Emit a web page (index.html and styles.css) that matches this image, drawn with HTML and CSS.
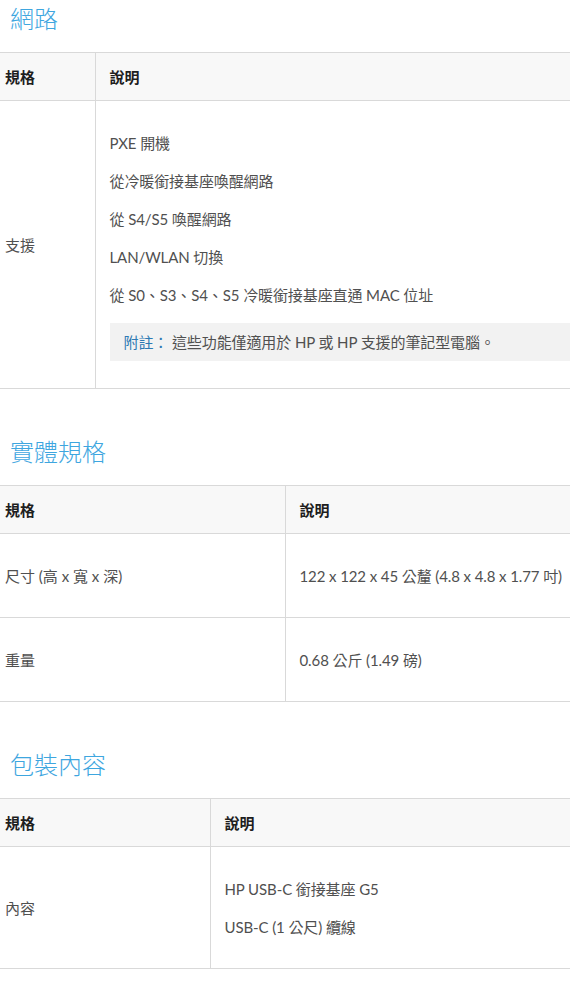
FILE: index.html
```html
<!DOCTYPE html>
<html lang="zh-Hant">
<head>
<meta charset="utf-8">
<title>規格</title>
<link rel="stylesheet" href="styles.css">
</head>
<body>
<section class="section">
  <h2 class="title">網路</h2>
  <table class="spec">
    <colgroup><col class="w95"><col></colgroup>
    <thead><tr><th class="k">規格</th><th class="v">說明</th></tr></thead>
    <tbody>
      <tr>
        <td class="k">支援</td>
        <td class="v list">
          <p>PXE 開機</p>
          <p>從冷暖銜接基座喚醒網路</p>
          <p>從 S4/S5 喚醒網路</p>
          <p>LAN/WLAN 切換</p>
          <p>從 S0、S3、S4、S5 冷暖銜接基座直通 MAC 位址</p>
          <div class="note"><span class="note-label">附註：</span> 這些功能僅適用於 HP 或 HP 支援的筆記型電腦。</div>
        </td>
      </tr>
    </tbody>
  </table>
</section>

<section class="section">
  <h2 class="title">實體規格</h2>
  <table class="spec">
    <colgroup><col class="w285"><col></colgroup>
    <thead><tr><th class="k">規格</th><th class="v">說明</th></tr></thead>
    <tbody>
      <tr class="row84"><td class="k">尺寸 (高 x 寬 x 深)</td><td class="v">122 x 122 x 45 公釐 (4.8 x 4.8 x 1.77 吋)</td></tr>
      <tr class="row84"><td class="k">重量</td><td class="v">0.68 公斤 (1.49 磅)</td></tr>
    </tbody>
  </table>
</section>

<section class="section">
  <h2 class="title">包裝內容</h2>
  <table class="spec">
    <colgroup><col class="w210"><col></colgroup>
    <thead><tr><th class="k">規格</th><th class="v">說明</th></tr></thead>
    <tbody>
      <tr>
        <td class="k">內容</td>
        <td class="v list short">
          <p>HP USB-C 銜接基座 G5</p>
          <p>USB-C (1 公尺) 纜線</p>
        </td>
      </tr>
    </tbody>
  </table>
</section>
</body>
</html>
```

FILE: styles.css
```css
html, body {
  margin: 0;
  padding: 0;
  background: #ffffff;
}
body {
  width: 570px;
  overflow: hidden;
  font-family: "Lato", "Noto Sans CJK TC", sans-serif;
  font-size: 15px;
  color: #505050;
}
.section {
  margin-bottom: 44px;
}
.title {
  margin: 0 0 16px 0;
  padding-left: 10px;
  height: 36px;
  line-height: 36px;
  font-size: 24px;
  font-weight: 300;
  color: #3ea6df;
  font-family: "Noto Sans CJK TC", sans-serif;
}
.spec {
  width: 100%;
  border-collapse: collapse;
  table-layout: fixed;
}
.w95 { width: 95px; }
.w285 { width: 285px; }
.w210 { width: 210px; }
.spec th,
.spec td {
  border: 1px solid #d9d9d9;
  vertical-align: middle;
  text-align: left;
  white-space: nowrap;
  line-height: 20px;
}
.spec tr > :first-child { border-left: none; }
.spec tr > :last-child { border-right: none; }
.spec thead tr {
  height: 48px;
  background: #f8f8f8;
}
.spec th {
  font-weight: 700;
  color: #1e1e1e;
  font-size: 15px;
}
.spec .k { padding: 0 5px; }
.spec .v { padding: 0 14px; letter-spacing: -0.1px; }
.row84 { height: 84px; }
.list {
  padding-top: 32px !important;
  padding-bottom: 27px !important;
}
.list.short {
  padding-top: 32px !important;
  padding-bottom: 31px !important;
}
.list p {
  margin: 0 0 18px 0;
  line-height: 20px;
}
.list p:last-of-type { margin-bottom: 0; }
.note {
  margin-top: 18px;
  margin-right: -14px;
  background: #f2f2f2;
  height: 38px;
  line-height: 38px;
  padding-left: 14px;
}
.note-label {
  color: #2d79b3;
}
```
